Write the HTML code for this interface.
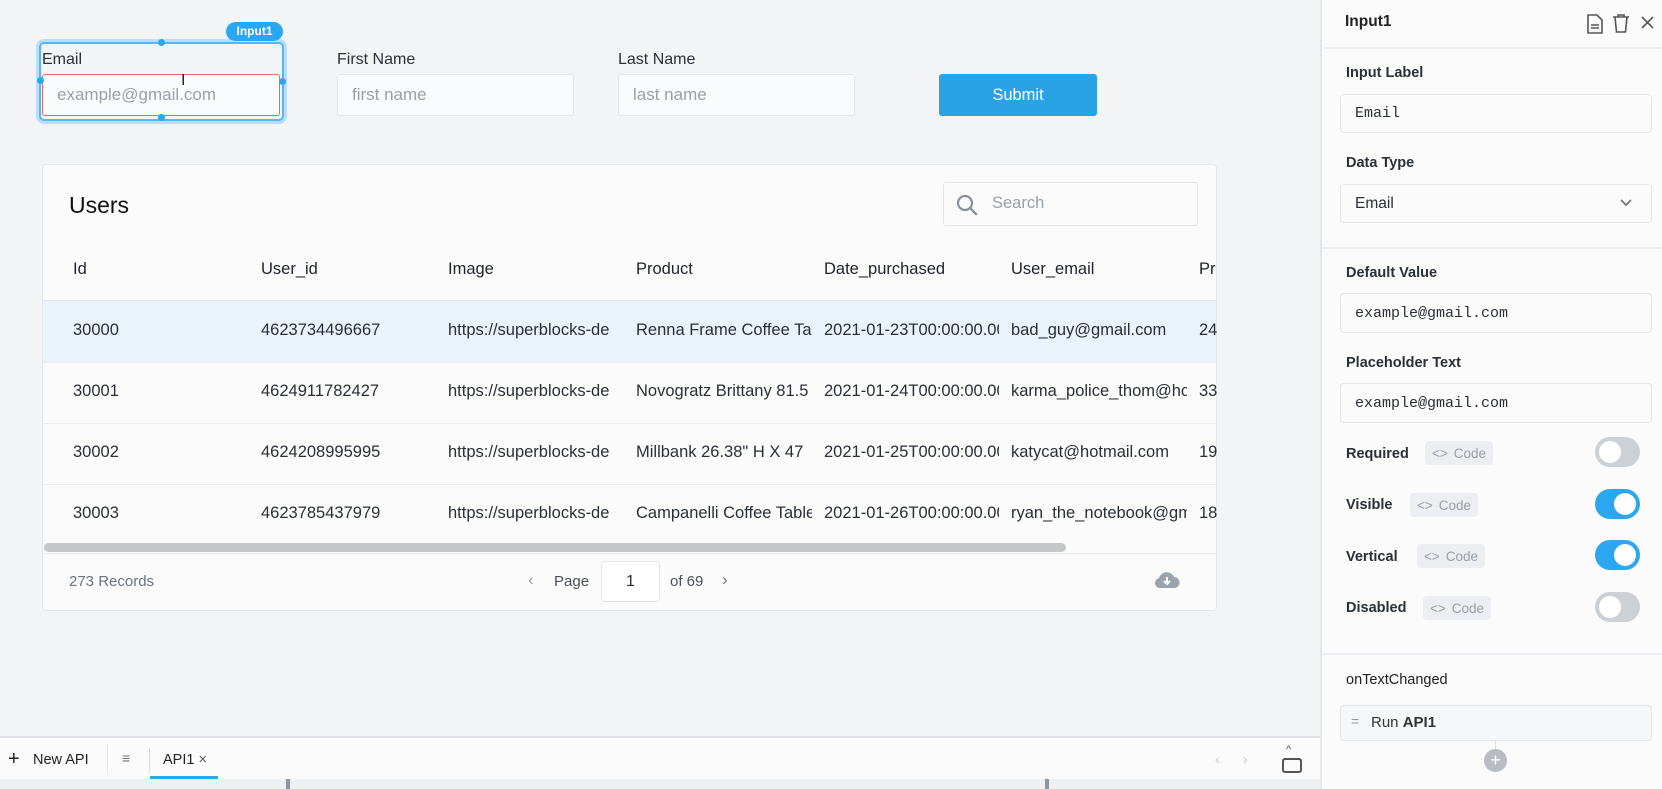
<!DOCTYPE html>
<html><head><meta charset="utf-8"><style>
*{box-sizing:border-box;margin:0;padding:0}
body{width:1662px;height:789px;overflow:hidden;background:#f3f4f6;font-family:"Liberation Sans",sans-serif;color:#1f2329;position:relative}
.abs{position:absolute}
.lbl{font-size:16px;color:#2b2f36}
.inp{background:#fafbfc;border:1px solid #e3e5e8;border-radius:3px;font-size:17px;color:#9aa0a8;padding-left:14px;display:flex;align-items:center}
.cell{position:absolute;font-size:16.5px;color:#2b2f36;white-space:nowrap;overflow:hidden}
.hd{font-weight:normal;color:#1f2329;font-size:16.5px}
.pl{font-size:14.5px;color:#2b2f36;font-weight:bold;left:1346px}
.pin{position:absolute;left:1340px;width:312px;background:#fbfbfc;border:1px solid #e3e5e8;border-radius:4px;font-family:"Liberation Mono",monospace;font-size:15px;color:#2b2f36;padding-left:14px;display:flex;align-items:center}
.code{position:absolute;height:24px;background:#eceef1;border-radius:4px;font-size:13.5px;color:#9aa0a8;display:flex;align-items:center;padding:0 7px;gap:6px}
.tg{position:absolute;left:1595px;width:45px;height:30px;border-radius:15px}
.tg::after{content:"";position:absolute;top:4px;width:22px;height:22px;border-radius:50%;background:#fff}
.off{background:#cdd1d6}.off::after{left:4px}
.on{background:#2aa7f0}.on::after{right:4px}
</style></head><body>

<!-- Form -->
<div class="abs" style="left:39px;top:42px;width:245px;height:79px;border:2px solid #58b6f5;border-radius:5px;box-shadow:0 0 0 3px #b8def9"></div>
<div class="abs" style="left:226px;top:22px;width:57px;height:19px;background:#2aa7f0;border-radius:10px;color:#fff;font-size:12px;font-weight:bold;text-align:center;line-height:19px">Input1</div>
<div class="abs lbl" style="left:42px;top:51px">Email</div>
<div class="abs inp" style="left:42px;top:74px;width:238px;height:42px;border:1px solid #e8676b;background:#fafbfc">example@gmail.com</div>
<div class="abs" style="left:158px;top:39px;width:7px;height:7px;border-radius:50%;background:#2aa7f0"></div>
<div class="abs" style="left:158px;top:114px;width:7px;height:7px;border-radius:50%;background:#2aa7f0"></div>
<div class="abs" style="left:37px;top:77px;width:7px;height:7px;border-radius:50%;background:#2aa7f0"></div>
<div class="abs" style="left:279px;top:78px;width:7px;height:7px;border-radius:50%;background:#2aa7f0"></div>
<div class="abs" style="left:181px;top:72px;font-size:16px;color:#222">I</div>

<div class="abs lbl" style="left:337px;top:51px">First Name</div>
<div class="abs inp" style="left:337px;top:74px;width:237px;height:42px">first name</div>
<div class="abs lbl" style="left:618px;top:51px">Last Name</div>
<div class="abs inp" style="left:618px;top:74px;width:237px;height:42px">last name</div>
<div class="abs" style="left:939px;top:74px;width:158px;height:42px;background:#2aa3e6;border-radius:3px;color:#fff;font-size:16.5px;text-align:center;line-height:42px">Submit</div>

<!-- Table card -->
<div class="abs" style="left:42px;top:164px;width:1175px;height:447px;background:#fbfbfc;border:1px solid #e5e7ea;border-radius:4px;overflow:hidden">
  <div class="abs" style="left:26px;top:27px;font-size:23px;color:#111">Users</div>
  <div class="abs" style="left:900px;top:17px;width:255px;height:44px;border:1px solid #e3e5e8;border-radius:3px;background:#fbfbfc">
    <svg class="abs" style="left:12px;top:11px" width="22" height="22" viewBox="0 0 22 22"><circle cx="9" cy="9" r="7" fill="none" stroke="#8a9099" stroke-width="2.2"/><line x1="14" y1="14" x2="20" y2="20" stroke="#8a9099" stroke-width="2.4" stroke-linecap="round"/></svg>
    <div class="abs" style="left:48px;top:11px;font-size:16.5px;color:#9aa0a8">Search</div>
  </div>
  <div class="abs" style="left:0;top:135px;width:1175px;height:62px;background:#eaf2fb;border-top:1px solid #e5e7ea"></div>
  <div class="abs" style="left:0;top:197px;width:1175px;height:1px;background:#eceef1"></div>
  <div class="abs" style="left:0;top:258px;width:1175px;height:1px;background:#eceef1"></div>
  <div class="abs" style="left:0;top:319px;width:1175px;height:1px;background:#eceef1"></div>
  <div class="abs" style="left:1px;top:378px;width:1022px;height:9px;border-radius:5px;background:#c4c6c8"></div>
  <div class="abs" style="left:0;top:388px;width:1175px;height:1px;background:#eceef1"></div>
</div>
<!-- table text -->
<div class="cell hd" style="left:73px;top:260px">Id</div>
<div class="cell hd" style="left:261px;top:260px">User_id</div>
<div class="cell hd" style="left:448px;top:260px">Image</div>
<div class="cell hd" style="left:636px;top:260px">Product</div>
<div class="cell hd" style="left:824px;top:260px">Date_purchased</div>
<div class="cell hd" style="left:1011px;top:260px">User_email</div>
<div class="cell hd" style="left:1199px;top:260px;width:18px">Pr</div>

<div class="cell" style="left:73px;top:321px">30000</div>
<div class="cell" style="left:261px;top:321px">4623734496667</div>
<div class="cell" style="left:448px;top:321px;width:178px">https://superblocks-de</div>
<div class="cell" style="left:636px;top:321px;width:176px">Renna Frame Coffee Table</div>
<div class="cell" style="left:824px;top:321px;width:175px">2021-01-23T00:00:00.000</div>
<div class="cell" style="left:1011px;top:321px;width:176px">bad_guy@gmail.com</div>
<div class="cell" style="left:1199px;top:321px;width:18px">24</div>

<div class="cell" style="left:73px;top:382px">30001</div>
<div class="cell" style="left:261px;top:382px">4624911782427</div>
<div class="cell" style="left:448px;top:382px;width:178px">https://superblocks-de</div>
<div class="cell" style="left:636px;top:382px;width:176px">Novogratz Brittany 81.5</div>
<div class="cell" style="left:824px;top:382px;width:175px">2021-01-24T00:00:00.000</div>
<div class="cell" style="left:1011px;top:382px;width:176px">karma_police_thom@hotmail</div>
<div class="cell" style="left:1199px;top:382px;width:18px">33</div>

<div class="cell" style="left:73px;top:443px">30002</div>
<div class="cell" style="left:261px;top:443px">4624208995995</div>
<div class="cell" style="left:448px;top:443px;width:178px">https://superblocks-de</div>
<div class="cell" style="left:636px;top:443px;width:176px">Millbank 26.38" H X 47</div>
<div class="cell" style="left:824px;top:443px;width:175px">2021-01-25T00:00:00.000</div>
<div class="cell" style="left:1011px;top:443px;width:176px">katycat@hotmail.com</div>
<div class="cell" style="left:1199px;top:443px;width:18px">19</div>

<div class="cell" style="left:73px;top:504px">30003</div>
<div class="cell" style="left:261px;top:504px">4623785437979</div>
<div class="cell" style="left:448px;top:504px;width:178px">https://superblocks-de</div>
<div class="cell" style="left:636px;top:504px;width:176px">Campanelli Coffee Table</div>
<div class="cell" style="left:824px;top:504px;width:175px">2021-01-26T00:00:00.000</div>
<div class="cell" style="left:1011px;top:504px;width:176px">ryan_the_notebook@gmail</div>
<div class="cell" style="left:1199px;top:504px;width:18px">18</div>

<!-- footer -->
<div class="abs" style="left:69px;top:573px;font-size:15px;color:#6b7280">273 Records</div>
<div class="abs" style="left:528px;top:570px;font-size:17px;color:#9aa0a8">‹</div>
<div class="abs" style="left:554px;top:573px;font-size:15px;color:#4b5058">Page</div>
<div class="abs" style="left:601px;top:561px;width:59px;height:41px;border:1px solid #e3e5e8;border-radius:4px;background:#fff;text-align:center;line-height:40px;font-size:16px;color:#2b2f36">1</div>
<div class="abs" style="left:670px;top:573px;font-size:15px;color:#4b5058">of 69</div>
<div class="abs" style="left:722px;top:570px;font-size:17px;color:#6b7280">›</div>
<svg class="abs" style="left:1154px;top:570px" width="26" height="20" viewBox="0 0 26 20"><path d="M6 18a5 5 0 0 1-1-9.9A8 8 0 0 1 20 7a5.5 5.5 0 0 1 0 11z" fill="#9aa3ad"/><path d="M13 7v7M10 11l3 3 3-3" stroke="#fff" stroke-width="2" fill="none"/></svg>

<!-- bottom bar -->
<div class="abs" style="left:0;top:736px;width:1320px;height:2px;background:#dfe1e4"></div>
<div class="abs" style="left:0;top:738px;width:1320px;height:41px;background:#fbfbfc"></div>
<div class="abs" style="left:0;top:779px;width:1320px;height:10px;background:#eef0f2"></div>
<div class="abs" style="left:286px;top:779px;width:4px;height:10px;background:#8e959d"></div>
<div class="abs" style="left:1045px;top:779px;width:4px;height:10px;background:#8e959d"></div>
<div class="abs" style="left:8px;top:748px;font-size:20px;color:#222">+</div>
<div class="abs" style="left:33px;top:752px;font-size:14.5px;color:#222">New API</div>
<div class="abs" style="left:107px;top:744px;width:1px;height:30px;background:#e3e5e8"></div>
<div class="abs" style="left:122px;top:750px;font-size:14px;color:#6b7280">≡</div>
<div class="abs" style="left:149px;top:748px;width:1px;height:26px;background:#d8dadd"></div>
<div class="abs" style="left:163px;top:752px;font-size:14.5px;color:#222">API1 <span style="color:#555">×</span></div>
<div class="abs" style="left:150px;top:776px;width:68px;height:3px;background:#2aa7f0"></div>
<div class="abs" style="left:1215px;top:751px;font-size:14px;color:#c4c7cb">‹&nbsp;&nbsp;&nbsp;&nbsp;&nbsp;&nbsp;›</div>
<div class="abs" style="left:1282px;top:758px;width:20px;height:15px;border:2px solid #555;border-radius:3px"></div>
<div class="abs" style="left:1286px;top:744px;font-size:11px;color:#555">^</div>

<!-- right panel -->
<div class="abs" style="left:1320px;top:0;width:342px;height:789px;background:#fbfbfc;border-left:2px solid #e3e5e8"></div>
<div class="abs" style="left:1345px;top:13px;font-size:15.5px;color:#222;font-weight:bold">Input1</div>
<svg class="abs" style="left:1586px;top:14px" width="18" height="20" viewBox="0 0 18 20"><path d="M2 1h9l5 5v13H2z" fill="none" stroke="#555" stroke-width="1.6"/><path d="M5 11h8M5 14h8" stroke="#555" stroke-width="1.4"/></svg>
<svg class="abs" style="left:1612px;top:13px" width="18" height="20" viewBox="0 0 18 20"><path d="M1 4h16M6 4V2h6v2M3 4l1.5 15h9L15 4" fill="none" stroke="#555" stroke-width="1.6"/></svg>
<svg class="abs" style="left:1640px;top:15px" width="15" height="15" viewBox="0 0 15 15"><path d="M2 2l11 11M13 2L2 13" stroke="#555" stroke-width="1.6"/></svg>
<div class="abs" style="left:1325px;top:47px;width:337px;height:2px;background:#eceef1"></div>

<div class="abs pl" style="top:65px">Input Label</div>
<div class="pin" style="top:94px;height:39px">Email</div>
<div class="abs pl" style="top:155px">Data Type</div>
<div class="pin" style="top:184px;height:39px;font-family:'Liberation Sans',sans-serif;font-size:15.5px">Email</div>
<svg class="abs" style="left:1619px;top:198px" width="14" height="10" viewBox="0 0 14 10"><path d="M2 2l5 5 5-5" fill="none" stroke="#777" stroke-width="1.8"/></svg>
<div class="abs" style="left:1322px;top:247px;width:340px;height:2px;background:#eceef1"></div>
<div class="abs pl" style="top:265px">Default Value</div>
<div class="pin" style="top:293px;height:40px">example@gmail.com</div>
<div class="abs pl" style="top:355px">Placeholder Text</div>
<div class="pin" style="top:383px;height:40px">example@gmail.com</div>

<div class="abs pl" style="top:446px">Required</div>
<div class="code" style="left:1425px;top:441px">&lt;&gt; <span>Code</span></div>
<div class="tg off" style="top:437px"></div>
<div class="abs pl" style="top:497px">Visible</div>
<div class="code" style="left:1410px;top:493px">&lt;&gt; <span>Code</span></div>
<div class="tg on" style="top:489px"></div>
<div class="abs pl" style="top:549px">Vertical</div>
<div class="code" style="left:1417px;top:544px">&lt;&gt; <span>Code</span></div>
<div class="tg on" style="top:540px"></div>
<div class="abs pl" style="top:600px">Disabled</div>
<div class="code" style="left:1423px;top:596px">&lt;&gt; <span>Code</span></div>
<div class="tg off" style="top:592px"></div>

<div class="abs" style="left:1322px;top:653px;width:340px;height:2px;background:#eceef1"></div>
<div class="abs pl" style="top:672px;font-weight:normal;color:#222">onTextChanged</div>
<div class="abs" style="left:1340px;top:705px;width:312px;height:36px;background:#f6f7f8;border:1px solid #e3e5e8;border-radius:4px"></div>
<div class="abs" style="left:1351px;top:713px;font-size:14px;color:#999">=</div>
<div class="abs" style="left:1371px;top:714px;font-size:15px;color:#333">Run <b>API1</b></div>
<div class="abs" style="left:1495px;top:741px;width:1px;height:8px;background:#ddd"></div>
<div class="abs" style="left:1484px;top:749px;width:23px;height:23px;border-radius:50%;background:#b9bdc3;color:#fff;text-align:center;line-height:22px;font-size:18px">+</div>
</body></html>
